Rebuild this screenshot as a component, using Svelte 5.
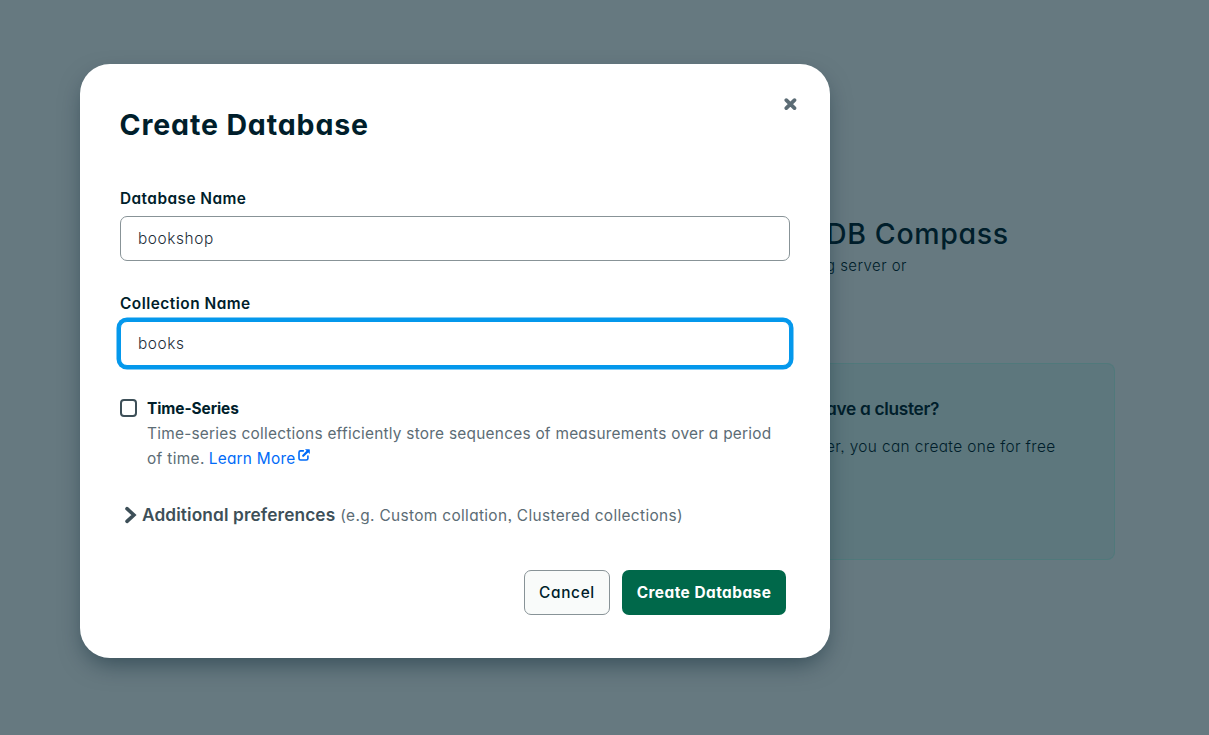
<script>
  let database = $state('bookshop');
  let collection = $state('books');
  let timeSeries = $state(false);
</script>

<div class="app">
  <main class="page">
    <h1><span class="fit welcome">DB Compass</span></h1>
    <p class="intro"><span class="fit sub">g server or</span></p>
    <section class="card">
      <h2><span class="fit ask">ave a cluster?</span></h2>
      <p><span class="fit free">er, you can create one for free</span></p>
    </section>
  </main>

  <div class="overlay">
    <div class="modal" role="dialog" aria-labelledby="title">
      <header>
        <h3 id="title"><span class="fit title">Create Database</span></h3>
        <button class="close" aria-label="Close">
          <svg width="14" height="14" viewBox="0 0 14 14"><path d="M3.3 3.1L11.5 11.1M11.5 3.1L3.3 11.1" stroke="#5c6c75" stroke-width="3.7" stroke-linecap="round" /></svg>
        </button>
      </header>

      <label for="db"><span class="fit l1">Database Name</span></label>
      <input id="db" class="i1" bind:value={database} />

      <label for="coll" class="second"><span class="fit l2">Collection Name</span></label>
      <input id="coll" class="i2 focused" bind:value={collection} />

      <div class="option">
        <button class="box" role="checkbox" aria-checked={timeSeries} aria-label="Time-Series" onclick={() => (timeSeries = !timeSeries)}></button>
        <div>
          <div class="name"><span class="fit ts">Time-Series</span></div>
          <div class="desc"><span class="fit d1">Time-series collections efficiently store sequences of measurements over a period</span></div>
          <div class="desc">
            <span class="fit d2">of time.</span><a href="#more"><span class="fit more">Learn More</span><svg width="14" height="14" viewBox="0 0 14 14" fill="none" stroke="#016bf8"><path d="M6.3 2.9H3.6Q2 2.9 2 4.5V10.4Q2 12 3.6 12H9.3Q10.9 12 10.9 10.4V8" stroke-width="1.6" stroke-linecap="round" /><path d="M6.2 7.8L10.6 3.4" stroke-width="2.2" stroke-linecap="round" /><path d="M8 1.2H12.2Q12.8 1.2 12.8 1.8V6Z" fill="#016bf8" stroke="none" /></svg></a>
          </div>
        </div>
      </div>

      <div class="prefs">
        <svg width="14" height="20" viewBox="0 0 14 20" fill="none"><path d="M3 3.7L9.9 10L3 16.3" stroke="#3d4f58" stroke-width="3.6" stroke-linecap="round" /></svg>
        <strong><span class="fit ap">Additional preferences</span></strong>
        <span class="fit eg">(e.g. Custom collation, Clustered collections)</span>
      </div>

      <footer>
        <button class="cancel"><span class="fit ca">Cancel</span></button>
        <button class="create"><span class="fit cr">Create Database</span></button>
      </footer>
    </div>
  </div>
</div>

<style>
  :global(body) {
    margin: 0;
    overflow: hidden;
  }
  .app {
    position: relative;
    height: 735px;
    width: 1209px;
    overflow: hidden;
    background: #667980;
    font-family: Inter, 'Open Sans', sans-serif;
    font-feature-settings: 'cv11', 'ss03';
    color: #001e2b;
    font-size: 15.4px;
    line-height: 25px;
  }
  .app * {
    box-sizing: border-box;
  }
  h1, h2, h3, p {
    margin: 0;
  }
  .fit {
    white-space: nowrap;
  }
  .welcome { letter-spacing: 0.65px; }
  .sub { letter-spacing: 0.45px; }
  .ask { letter-spacing: -0.3px; }
  .free { letter-spacing: 0.38px; }
  .title { letter-spacing: 0.87px; }
  .l1 { letter-spacing: 0.45px; }
  .l2 { letter-spacing: 0.5px; }
  .i1 { letter-spacing: 0.6px; }
  .i2 { letter-spacing: 0.6px; }
  .ts { letter-spacing: -0.06px; }
  .d1 { letter-spacing: 0.255px; }
  .d2 { letter-spacing: 0.35px; }
  .more { letter-spacing: 0.25px; }
  .ap { letter-spacing: 0.11px; }
  .eg { letter-spacing: 0.35px; }
  .ca { letter-spacing: 0.65px; }
  .cr { letter-spacing: 0.47px; }
  .page {
    padding: 214px 0 0 826px;
  }
  h1 {
    font-size: 28.5px;
    line-height: 40px;
    font-weight: 500;
  }
  .intro {
    font-size: 15px;
    line-height: 24px;
    font-weight: 350;
  }
  .card {
    width: 290px;
    height: 197px;
    margin-top: 85px;
    margin-left: -1px;
    padding: 32px 0 0 1px;
    background: #5d777d;
    border: 1px solid #50797b;
    border-left: 0;
    border-radius: 0 8px 8px 0;
  }
  h2 {
    font-size: 17.3px;
    line-height: 26px;
    font-weight: 600;
  }
  .card p {
    margin-top: 12px;
    font-weight: 350;
  }
  .overlay {
    position: absolute;
    inset: 0;
    padding: 64px 80px;
  }
  .modal {
    width: 750px;
    height: 594px;
    padding: 40px;
    background: #fff;
    border-radius: 30px;
    box-shadow: 0 10px 25px -5px rgba(0, 30, 43, 0.5);
  }
  header {
    display: flex;
    justify-content: space-between;
    height: 82px;
  }
  h3 {
    font-size: 28.5px;
    line-height: 42px;
    font-weight: 650;
    margin-left: -0.5px;
  }
  button {
    font: inherit;
    padding: 0;
    margin: 0;
  }
  .close {
    width: 14px;
    height: 14px;
    margin: -7px -7px 0 0;
    border: 0;
    background: none;
  }
  svg {
    display: block;
    flex: none;
  }
  label {
    display: block;
    height: 30px;
    font-weight: 600;
  }
  input {
    display: block;
    width: 670px;
    height: 45px;
    padding: 0 17px 1px;
    border: 1px solid #889397;
    border-radius: 7px;
    background: #fff;
    color: #1c2d38;
    font: inherit;
    font-weight: 350;
    font-feature-settings: inherit;
    outline: none;
  }
  .second {
    margin-top: 30px;
  }
  .focused {
    border-color: #0498ec;
    box-shadow: 0 0 0 3.5px #0498ec;
  }
  .option {
    display: flex;
    gap: 10px;
    margin-top: 30px;
  }
  .box {
    width: 17px;
    height: 18px;
    margin-top: 3px;
    border: 2px solid #3d4f58;
    border-radius: 4px;
    background: #fff;
    flex: none;
  }
  .name {
    font-weight: 650;
  }
  .desc {
    display: flex;
    color: #5c6c75;
    font-weight: 380;
  }
  a {
    display: flex;
    color: #016bf8;
    text-decoration: none;
    margin-left: 4px;
  }
  a svg {
    margin: 2px 0 0 2px;
  }
  .prefs {
    display: flex;
    align-items: center;
    height: 26px;
    margin-top: 31px;
    padding-left: 4px;
    color: #5c6c75;
    font-weight: 380;
  }
  strong {
    margin: 0 5px 2px 4px;
    font-size: 17.3px;
    font-weight: 600;
    color: #3d4f58;
  }
  footer {
    display: flex;
    justify-content: flex-end;
    gap: 12px;
    margin: 42px 4px 0 0;
  }
  footer button {
    height: 45px;
    border-radius: 7px;
    font-feature-settings: inherit;
  }
  .cancel {
    width: 86px;
    border: 1px solid #889397;
    background: #f9fbfa;
    color: #001e2b;
    font-weight: 500;
  }
  .create {
    width: 164px;
    border: 0;
    background: #00684a;
    color: #fff;
    font-weight: 650;
  }
</style>
